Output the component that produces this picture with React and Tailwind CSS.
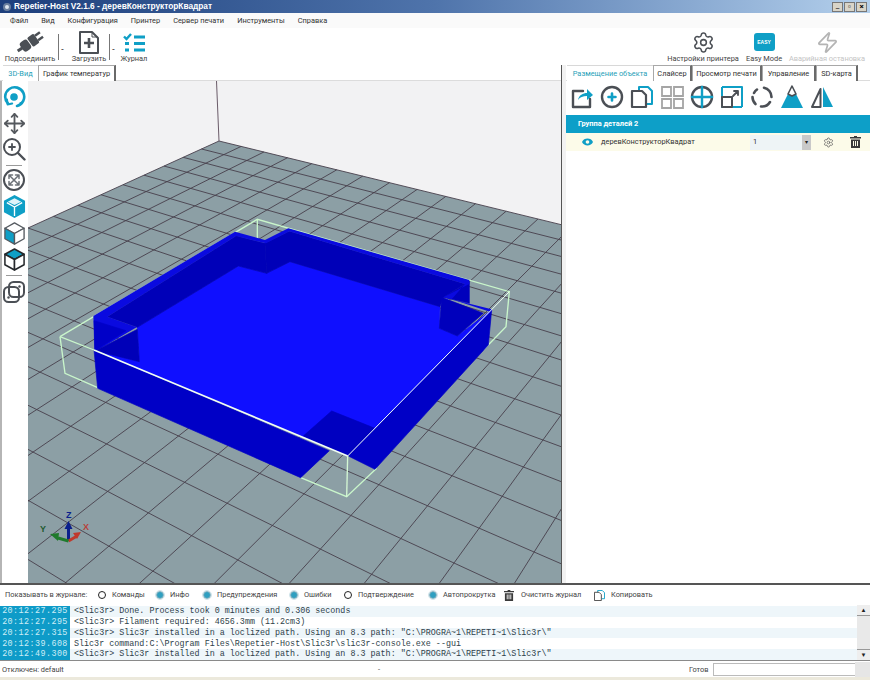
import React from 'react';
import { Move, Settings, Zap } from 'lucide-react';

const TEAL = '#0f9fc6';
const DARK = '#4b4f55';

// floor homography fitted on grid crossings read from the screenshot
const project = (u, v) => {
  const w = 1 - 0.0213 * u - 0.01504 * v;
  return [(219 - 21.82 * u + 18.49 * v) / w, (141 + 4.81 * u + 3.206 * v) / w];
};
const GRID_U = 24;
const GRID_V = 24;

const toPts = (list) => list.map((p) => p.join(',')).join(' ');

function Solid({ c, p }) {
  return <polygon fill={c} stroke={c} strokeWidth="2" strokeLinejoin="round" points={p} />;
}

function Viewport() {
  const us = Array.from({ length: GRID_U + 1 }, (_, i) => i);
  const vs = Array.from({ length: GRID_V + 1 }, (_, i) => i);
  const floor = [project(0, 0), project(GRID_U, 0), project(GRID_U, GRID_V), project(0, GRID_V)];
  return (
    <svg className="block w-[533px] h-[502px] bg-[#f2f2f3]" viewBox="28 81 533 502">
      <polygon points={toPts(floor)} fill="#8c9fa5" />
      <g stroke="#473f4c" strokeWidth="0.9">
        {us.map((u) => {
          const a = project(u, 0);
          const b = project(u, GRID_V);
          return <line key={u} x1={a[0]} y1={a[1]} x2={b[0]} y2={b[1]} />;
        })}
        {vs.map((v) => {
          const a = project(0, v);
          const b = project(GRID_U, v);
          return <line key={v} x1={a[0]} y1={a[1]} x2={b[0]} y2={b[1]} />;
        })}
        <line x1="219" y1="141" x2="216.5" y2="81" stroke="#5a4a58" />
      </g>
      {/* points below are in 3x crop units */}
      <g transform="translate(50 210) scale(0.33333)">
        <g stroke="#c9f6cb" strokeWidth="4" fill="none">
          <polyline points="30,380 622,28 1378,245 1368,350 1300,420" />
          <line x1="622" y1="28" x2="622" y2="88" />
          <polyline points="30,380 45,490 150,536" />
          <polyline points="752,803 890,860 980,775" />
        </g>
        <Solid c="#0000c6" p="132,420 143,535 752,803 838,722" />
        <Solid c="#0000c6" p="895,738 975,778 1315,405 1325,300" />
        <Solid c="#0f0fff" p="262,352 565,168 650,190 720,155 1170,290 1168,355 1222,378 1325,300 893,738 132,420 268,455" />
        <Solid c="#0000c0" p="760,678 845,603 975,655 893,738" />
        <Solid c="#0000b8" p="172,320 558,78 645,100 650,190 565,168 262,352" />
        <Solid c="#0000b8" p="645,100 718,64 1245,222 1180,262 1170,290 720,155 650,190" />
        <Solid c="#0000bc" p="1258,215 1258,280 1180,262" />
        <Solid c="#0000bc" p="1175,262 1300,310 1222,378 1168,355" />
        <polygon fill="#0a0ae0" points="130,318 555,65 645,90 715,55 1258,210 1258,222 1180,262 1325,298 1322,306 1205,268 1245,222 718,64 648,100 558,78 172,320 260,352 160,410 135,425" />
        <Solid c="#0000c8" p="132,332 228,362 150,412 134,420" />
        <Solid c="#0000b8" p="160,410 262,358 268,455 136,422" />
        <g stroke="#f2fff2" fill="none">
          <line x1="132" y1="420" x2="893" y2="738" strokeWidth="5" />
          <line x1="893" y1="738" x2="1378" y2="245" strokeWidth="3" />
          <line x1="893" y1="738" x2="890" y2="860" strokeWidth="4" stroke="#d4f8d4" />
          <line x1="30" y1="380" x2="132" y2="420" strokeWidth="4" stroke="#c9f6cb" />
        </g>
      </g>
      {/* axis widget */}
      <g>
        <line x1="68.5" y1="541" x2="68.5" y2="526" stroke="#0a1f8c" strokeWidth="3" />
        <polygon points="68.5,521 64.500,529 72.500,529" fill="#0a1f8c" />
        <line x1="68.5" y1="541" x2="77" y2="536" stroke="#c0392b" strokeWidth="3" />
        <polygon points="81,532 73,533 77,539" fill="#c0392b" />
        <line x1="68.5" y1="541" x2="58" y2="538" stroke="#1f7a2c" strokeWidth="3" />
        <polygon points="50,534 59,533 58,541" fill="#1f7a2c" />
        <text x="66" y="518" fontSize="9" fontWeight="700" fill="#0a1f8c" fontFamily="Liberation Sans, sans-serif">Z</text>
        <text x="83" y="530" fontSize="9" fontWeight="700" fill="#b8413a" fontFamily="Liberation Sans, sans-serif">X</text>
        <text x="40" y="532" fontSize="9" fontWeight="700" fill="#1f5a30" fontFamily="Liberation Sans, sans-serif">Y</text>
      </g>
    </svg>
  );
}

function Cube({ top, left, right, stroke, w = 1.8 }) {
  return (
    <svg width="23" height="25" viewBox="0 0 24 26" fill="none" strokeWidth={w} strokeLinejoin="round" stroke={stroke}>
      <polygon points="12,2 22,7.5 12,13 2,7.5" fill={top} />
      <polygon points="2,7.5 12,13 12,24 2,18.5" fill={left} />
      <polygon points="22,7.5 12,13 12,24 22,18.5" fill={right} />
    </svg>
  );
}

function TealCube() {
  return (
    <svg width="23" height="25" viewBox="0 0 24 26" strokeLinejoin="round">
      <polygon points="12,1 23,7 23,19 12,25 1,19 1,7" fill={TEAL} />
      <polygon points="12,4.500 19,8 12,11.500 5,8" fill="#dff3f8" />
      <path d="M4 9l8 4.500 8-4.500M12 13.500V23" stroke="#ffffff" strokeWidth="1.400" fill="none" />
    </svg>
  );
}

function Icon({ size = 24, children, vb = '0 0 24 24' }) {
  return (
    <svg width={size} height={size} viewBox={vb} fill="none" strokeLinecap="round" strokeLinejoin="round">
      {children}
    </svg>
  );
}

function LeftStrip() {
  return (
    <div className="w-[28px] shrink-0 border-l-2 border-[#b5b5b5] bg-white flex flex-col items-center pt-[3px] pr-[2px]">
      <div className="h-[26px] flex items-center">
        <Icon>
          <path d="M6 18.5A9.5 9.5 0 1 1 15 21" stroke={TEAL} strokeWidth="2.6" />
          <circle cx="12" cy="12" r="3.8" fill={TEAL} />
          <path d="M5 14.5l.6 5 4.6-1" stroke={TEAL} strokeWidth="2" />
          <circle cx="18.5" cy="18" r="1.1" fill={TEAL} />
        </Icon>
      </div>
      <div className="h-[26px] flex items-center">
        <Move size={23} color="#55595e" strokeWidth={1.9} />
      </div>
      <div className="h-[26px] flex items-center">
        <Icon>
          <circle cx="10" cy="10" r="8" stroke={DARK} strokeWidth="2" />
          <path d="M16 16l6.5 6.5" stroke={DARK} strokeWidth="2.4" />
          <path d="M7 10h6M10 7v6" stroke={DARK} strokeWidth="1.8" />
        </Icon>
      </div>
      <div className="w-[16px] h-px bg-[#9a9a9a] mt-[3px] mb-[1px]" />
      <div className="h-[26px] flex items-center">
        <Icon>
          <circle cx="12" cy="12" r="10" stroke={DARK} strokeWidth="2" />
          <path d="M8 8l8 8M16 8l-8 8M7 10.5V7h3.5M17 10.5V7h-3.5M7 13.5V17h3.5M17 13.5V17h-3.5" stroke="#6b7076" strokeWidth="1.5" />
        </Icon>
      </div>
      <div className="h-[27px] flex items-center">
        <TealCube />
      </div>
      <div className="h-[26px] flex items-center">
        <Cube top="#ffffff" left={TEAL} right="#ffffff" stroke="#555a60" w={1.4} />
      </div>
      <div className="h-[26px] flex items-center">
        <Cube top={TEAL} left="#ffffff" right="#ffffff" stroke="#26292c" w={1.6} />
      </div>
      <div className="w-[16px] h-px bg-[#9a9a9a] mt-[3px] mb-[2px]" />
      <div className="h-[27px] flex items-center">
        <Icon>
          <rect x="2" y="7" width="15" height="15" rx="4.5" stroke={DARK} strokeWidth="2" />
          <rect x="7" y="2" width="15" height="15" rx="4.5" stroke={DARK} strokeWidth="2" />
          <circle cx="17.5" cy="6.5" r="1.2" fill={DARK} />
          <circle cx="6.5" cy="17.5" r="1.2" fill={DARK} />
        </Icon>
      </div>
    </div>
  );
}

const panelIcons = [
  <Icon key="share">
    <path d="M13 6H3v16h17v-8" stroke={DARK} strokeWidth="2.4" />
    <path d="M8 15c1-5 5-7 9-7V4l6 6-6 5v-4c-4 0-7 1-9 4z" fill={TEAL} />
  </Icon>,
  <Icon key="add">
    <circle cx="12" cy="12" r="10" stroke={DARK} strokeWidth="2.4" />
    <path d="M8.500 12h7M12 8.500v7" stroke={TEAL} strokeWidth="2.6" />
  </Icon>,
  <Icon key="copy">
    <path d="M9 6V2h9l4 4v13h-5" stroke={TEAL} strokeWidth="2" />
    <path d="M2 6h10l4 4v12H2z" stroke={DARK} strokeWidth="2.2" />
  </Icon>,
  <Icon key="grid">
    <path d="M2 2h9v9H2zM14 2h9v9h-9zM2 14h9v9H2zM14 14h9v9h-9z" stroke="#a5a5a5" strokeWidth="1.8" strokeLinecap="butt" strokeLinejoin="miter" />
  </Icon>,
  <Icon key="center">
    <circle cx="12" cy="12" r="10" stroke={DARK} strokeWidth="2.4" />
    <path d="M2 12h20M12 2v20" stroke={TEAL} strokeWidth="2.4" />
  </Icon>,
  <Icon key="scale">
    <path d="M2 2h20v20" stroke={TEAL} strokeWidth="2" strokeLinecap="butt" />
    <path d="M2 2v20h20" stroke={TEAL} strokeWidth="2" strokeLinecap="butt" />
    <rect x="2" y="12" width="10" height="10" fill="#fff" stroke={DARK} strokeWidth="2" />
    <path d="M13 11l5-5M14 6h4v4" stroke={DARK} strokeWidth="1.8" />
  </Icon>,
  <Icon key="rotate">
    <path d="M7 4.5A9.5 9.5 0 0 0 4 8M2.500 12a9.500 9.500 0 0 0 3 7" stroke={DARK} strokeWidth="2.6" />
    <path d="M14 2.700A9.500 9.500 0 0 1 21.500 12M20 17a9.500 9.500 0 0 1-9 4.500" stroke={DARK} strokeWidth="2.600" />
  </Icon>,
  <Icon key="height">
    <path d="M12 1L1 23h22z" fill={TEAL} />
    <path d="M12 1L8 9l4 2 4-2z" fill="#ffffff" stroke={DARK} strokeWidth="1.600" />
  </Icon>,
  <Icon key="mirror">
    <path d="M10.500 4v18H2z" stroke={DARK} strokeWidth="2" />
    <path d="M13 2l10 20H13z" fill={TEAL} />
  </Icon>,
];

function Tab({ active, w, children }) {
  if (active) {
    return (
      <div className={`${w} h-[16px] shrink-0 whitespace-nowrap flex items-center justify-center text-[#1f9fb8] border-t border-[#d8d8d8] bg-white`}>
        {children}
      </div>
    );
  }
  return (
    <div className={`${w} h-[16px] shrink-0 whitespace-nowrap flex items-center justify-center text-[#333] border-t border-l border-[#a8a8a8] border-r-2 border-r-[#6a6a6a] bg-white`}>
      {children}
    </div>
  );
}

function Radio({ on, w, children }) {
  return (
    <div className={`${w} shrink-0 flex items-center gap-[6px] whitespace-nowrap`}>
      {on ? (
        <span className="w-[8px] h-[8px] rounded-full bg-[#2f9fc0] border border-[#8fb5c2] outline outline-1 outline-[#cfe3ea] shrink-0" />
      ) : (
        <span className="w-[8px] h-[8px] rounded-full bg-white border-[1.5px] border-[#222] shrink-0" />
      )}
      <span>{children}</span>
    </div>
  );
}

const logRows = [
  ['20:12:27.295', '<Slic3r> Done. Process took 0 minutes and 0.306 seconds'],
  ['20:12:27.295', '<Slic3r> Filament required: 4656.3mm (11.2cm3)'],
  ['20:12:27.315', '<Slic3r> Slic3r installed in a loclized path. Using an 8.3 path: "C:\\PROGRA~1\\REPETI~1\\Slic3r\\"'],
  ['20:12:39.608', 'Slic3r command:C:\\Program Files\\Repetier-Host\\Slic3r\\slic3r-console.exe --gui'],
  ['20:12:49.300', '<Slic3r> Slic3r installed in a loclized path. Using an 8.3 path: "C:\\PROGRA~1\\REPETI~1\\Slic3r\\"'],
];

export default function App() {
  return (
    <div className="w-[870px] h-[680px] overflow-hidden flex flex-col bg-white text-[7.4px] leading-none text-[#333] font-['Roboto',sans-serif]">
      {/* title bar */}
      <div className="h-[13px] shrink-0 flex items-center bg-gradient-to-r from-[#1d3f7c] via-[#4f74ab] to-[#b4d0ec] pl-[3px] pr-[3px]">
        <span className="w-[8px] h-[8px] rounded-full bg-[#dfe7f0] border-2 border-[#6a7f9e] mr-[3px]" />
        <span className="text-white font-bold text-[8.3px] font-['Liberation_Sans',sans-serif]">Repetier-Host V2.1.6 - деревКонструкторКвадрат</span>
        <div className="ml-auto flex gap-[1px]">
          <span className="w-[11px] h-[10px] bg-[#d8d4c8] border border-[#777] text-[8px] text-black flex items-end justify-center pb-[1px]">_</span>
          <span className="w-[11px] h-[10px] bg-[#d8d4c8] border border-[#777] text-[8px] text-black flex items-center justify-center">▫</span>
          <span className="w-[11px] h-[10px] bg-[#d8d4c8] border border-[#777] text-[8px] text-black font-bold flex items-center justify-center">×</span>
        </div>
      </div>

      {/* menu */}
      <div className="h-[15px] shrink-0 flex items-center pl-[10px] gap-[13px] bg-[#fafafa]">
        <span>Файл</span>
        <span>Вид</span>
        <span>Конфигурация</span>
        <span>Принтер</span>
        <span>Сервер печати</span>
        <span>Инструменты</span>
        <span>Справка</span>
      </div>

      {/* toolbar */}
      <div className="h-[37px] shrink-0 flex items-stretch bg-white text-[#444] whitespace-nowrap">
        <div className="w-[56px] ml-[2px] flex flex-col items-center justify-between pt-[3px] pb-[3px]">
          <svg width="30" height="23" viewBox="0 0 30 23" fill={DARK}>
            <g transform="rotate(-35 15 11.5)">
              <rect x="5" y="6" width="9" height="11" rx="3" />
              <rect x="15" y="6" width="8" height="11" rx="1.500" />
              <rect x="23" y="7.500" width="6" height="2.500" />
              <rect x="23" y="13" width="6" height="2.500" />
              <rect x="0" y="10" width="6" height="3" />
            </g>
          </svg>
          <span>Подсоединить</span>
        </div>
        <div className="w-px h-[26px] bg-[#777] mt-[6px]" />
        <span className="w-[10px] pt-[18px] pl-[2px] text-[#444] font-bold">-</span>
        <div className="w-[40px] flex flex-col items-center justify-between pt-[3px] pb-[3px]">
          <svg width="20" height="23" viewBox="0 0 20 23" fill="none" stroke={DARK} strokeWidth="2" strokeLinejoin="round">
            <path d="M1 1h12l6 6v15H1z" />
            <path d="M13 1v5h6" strokeWidth="1" />
            <path d="M10 7v10M5 12h10" strokeWidth="2.600" />
          </svg>
          <span>Загрузить</span>
        </div>
        <div className="w-px h-[26px] bg-[#777] mt-[6px]" />
        <span className="w-[10px] pt-[18px] pl-[2px] text-[#444] font-bold">-</span>
        <div className="w-[28px] flex flex-col items-center justify-between pt-[5px] pb-[3px]">
          <svg width="22" height="20" viewBox="0 0 22 20" fill="none" stroke={TEAL} strokeWidth="2.400">
            <path d="M1 3.500l2.500 2.500L8 1" />
            <path d="M11 4h11M11 10.500h11M11 17h11" strokeWidth="2.800" />
            <path d="M2 10.500h4M2 17h4" strokeWidth="2.800" />
          </svg>
          <span>Журнал</span>
        </div>
        <div className="ml-auto flex items-stretch">
          <div className="w-[72px] flex flex-col items-center justify-between pt-[3px] pb-[3px]">
            <Settings size={23} color={DARK} strokeWidth={1.600} />
            <span>Настройки принтера</span>
          </div>
          <div className="w-[36px] ml-[7px] flex flex-col items-center justify-between pt-[5px] pb-[3px]">
            <div className="w-[21px] h-[18px] rounded-[3px] bg-[#0f9fc6] flex items-center justify-center text-white font-bold text-[5px] font-['Liberation_Sans',sans-serif]">EASY</div>
            <span>Easy Mode</span>
          </div>
          <div className="w-[78px] ml-[6px] mr-[4px] flex flex-col items-center justify-between pt-[3px] pb-[3px] text-[#c4c4c4]">
            <Zap size={23} color="#b4b4b4" strokeWidth={1.800} />
            <span>Аварийная остановка</span>
          </div>
        </div>
      </div>

      {/* main */}
      <div className="h-[518px] shrink-0 flex">
        <div className="w-[562px] shrink-0 flex flex-col border-r border-[#555]">
          <div className="h-[16px] shrink-0 flex pl-[3px] border-b border-[#dcdcdc]">
            <Tab active w="w-[35px]">3D-Вид</Tab>
            <Tab w="w-[78px]">График температур</Tab>
          </div>
          <div className="flex">
            <LeftStrip />
            <Viewport />
          </div>
        </div>
        <div className="w-[4px] shrink-0 bg-[#f2f2f2]" />
        <div className="flex-1 flex flex-col min-w-0">
          <div className="h-[16px] shrink-0 flex pl-[1px] border-b border-[#dcdcdc]">
            <Tab active w="w-[86px]">Размещение объекта</Tab>
            <Tab w="w-[39px]">Слайсер</Tab>
            <Tab w="w-[70px]">Просмотр печати</Tab>
            <Tab w="w-[54px]">Управление</Tab>
            <Tab w="w-[42px]">SD-карта</Tab>
          </div>
          <div className="h-[34px] shrink-0 flex items-center pl-[4px] gap-[6px] pb-[2px]">
            {panelIcons}
          </div>
          <div className="h-[18px] shrink-0 bg-[#0d9fc8] flex items-center pl-[12px] text-white font-bold">
            Группа деталей 2
          </div>
          <div className="h-[18px] shrink-0 bg-[#fcfbe9] flex items-center pl-[16px]">
            <svg width="11" height="8" viewBox="0 0 12 8" className="shrink-0">
              <path d="M0 4c2-5 10-5 12 0-2 5-10 5-12 0z" fill={TEAL} />
              <circle cx="6" cy="4" r="2" fill="#fcfbe9" />
            </svg>
            <span className="ml-[8px] w-[149px] shrink-0">деревКонструкторКвадрат</span>
            <div className="w-[61px] h-[15px] shrink-0 bg-[#eef4f6] flex items-center justify-between pl-[3px]">
              <span>1</span>
              <span className="w-[9px] h-full bg-[#c9c9c9] flex items-center justify-center text-[6px] text-[#222]">▾</span>
            </div>
            <Settings size={11} color="#555" strokeWidth={1.500} className="ml-[12px] shrink-0" />
            <svg width="11" height="12" viewBox="0 0 11 12" className="ml-[16px] shrink-0" fill="#3a3a3a">
              <path d="M4 0h3v1h4v1.500H0V1h4zM1 3.500h9V12H1zM3 5v5h1V5zm2 0v5h1V5zm2 0v5h1V5z" fillRule="evenodd" />
            </svg>
          </div>
        </div>
      </div>

      {/* log */}
      <div className="h-[79px] shrink-0 border-t-2 border-[#555] flex flex-col">
        <div className="h-[20px] shrink-0 flex items-center pl-[5px] text-[#444] whitespace-nowrap">
          <span className="w-[93px] shrink-0">Показывать в журнале:</span>
          <Radio w="w-[58px]">Команды</Radio>
          <Radio on w="w-[47px]">Инфо</Radio>
          <Radio on w="w-[87px]">Предупреждения</Radio>
          <Radio on w="w-[54px]">Ошибки</Radio>
          <Radio w="w-[85px]">Подтверждение</Radio>
          <Radio on w="w-[75px]">Автопрокрутка</Radio>
          <div className="flex items-center gap-[7px] w-[90px] shrink-0">
            <svg width="10" height="11" viewBox="0 0 11 12" fill="#3a3a3a">
              <path d="M4 0h3v1h4v1.500H0V1h4zM1 3.500h9V12H1zM3 5v5h1V5zm2 0v5h1V5zm2 0v5h1V5z" fillRule="evenodd" />
            </svg>
            <span>Очистить журнал</span>
          </div>
          <div className="flex items-center gap-[6px]">
            <svg width="11" height="11" viewBox="0 0 12 12" fill="none" stroke="#444">
              <path d="M4 2.500V.5h5l2.500 2.500v6.500H8.500" stroke={TEAL} />
              <path d="M.5 2.500h5l2.500 2.500v6.500H.5z" />
            </svg>
            <span>Копировать</span>
          </div>
        </div>
        <div className="flex h-[56px] shrink-0 border-b border-[#8a8a8a]">
          <div className="flex-1 min-w-0 flex flex-col overflow-hidden font-['Liberation_Mono',monospace] text-[8.4px] pt-[1px]">
            {logRows.map((row, i) => (
              <div key={i} className={`h-[11px] flex items-center whitespace-nowrap ${i % 2 === 0 ? 'bg-[#eef6fa]' : 'bg-white'}`}>
                <span className="w-[70px] h-full shrink-0 bg-[#0e9bc8] text-[#cfeef7] tracking-[0.45px] flex items-center justify-center">{row[0]}</span>
                <span className="ml-[4px] text-[#2e3f4a]">{row[1]}</span>
              </div>
            ))}
          </div>
          <div className="w-[13px] shrink-0 bg-[#e9e9e9] flex flex-col justify-between items-center text-[6px] text-[#222]">
            <span className="h-[11px] w-full bg-[#eee] flex items-center justify-center border-b border-[#999]">▲</span>
            <span className="h-[11px] w-full bg-[#eee] flex items-center justify-center border-t border-[#999]">▼</span>
          </div>
        </div>
      </div>

      {/* status */}
      <div className="flex-1 flex flex-col text-[#444]">
        <div className="h-[15px] shrink-0 flex items-center pl-[2px] bg-white">
          <span className="w-[376px] shrink-0">Отключен: default</span>
          <span className="w-[311px] shrink-0">-</span>
          <span className="w-[24px] shrink-0">Готов</span>
          <div className="w-[142px] h-[13px] shrink-0 bg-white border-l border-t border-[#bbb] border-b" />
          <div className="flex-1 self-stretch bg-[#e6e6e6]" />
        </div>
        <div className="flex-1 bg-[#ece9dc]" />
      </div>
    </div>
  );
}
